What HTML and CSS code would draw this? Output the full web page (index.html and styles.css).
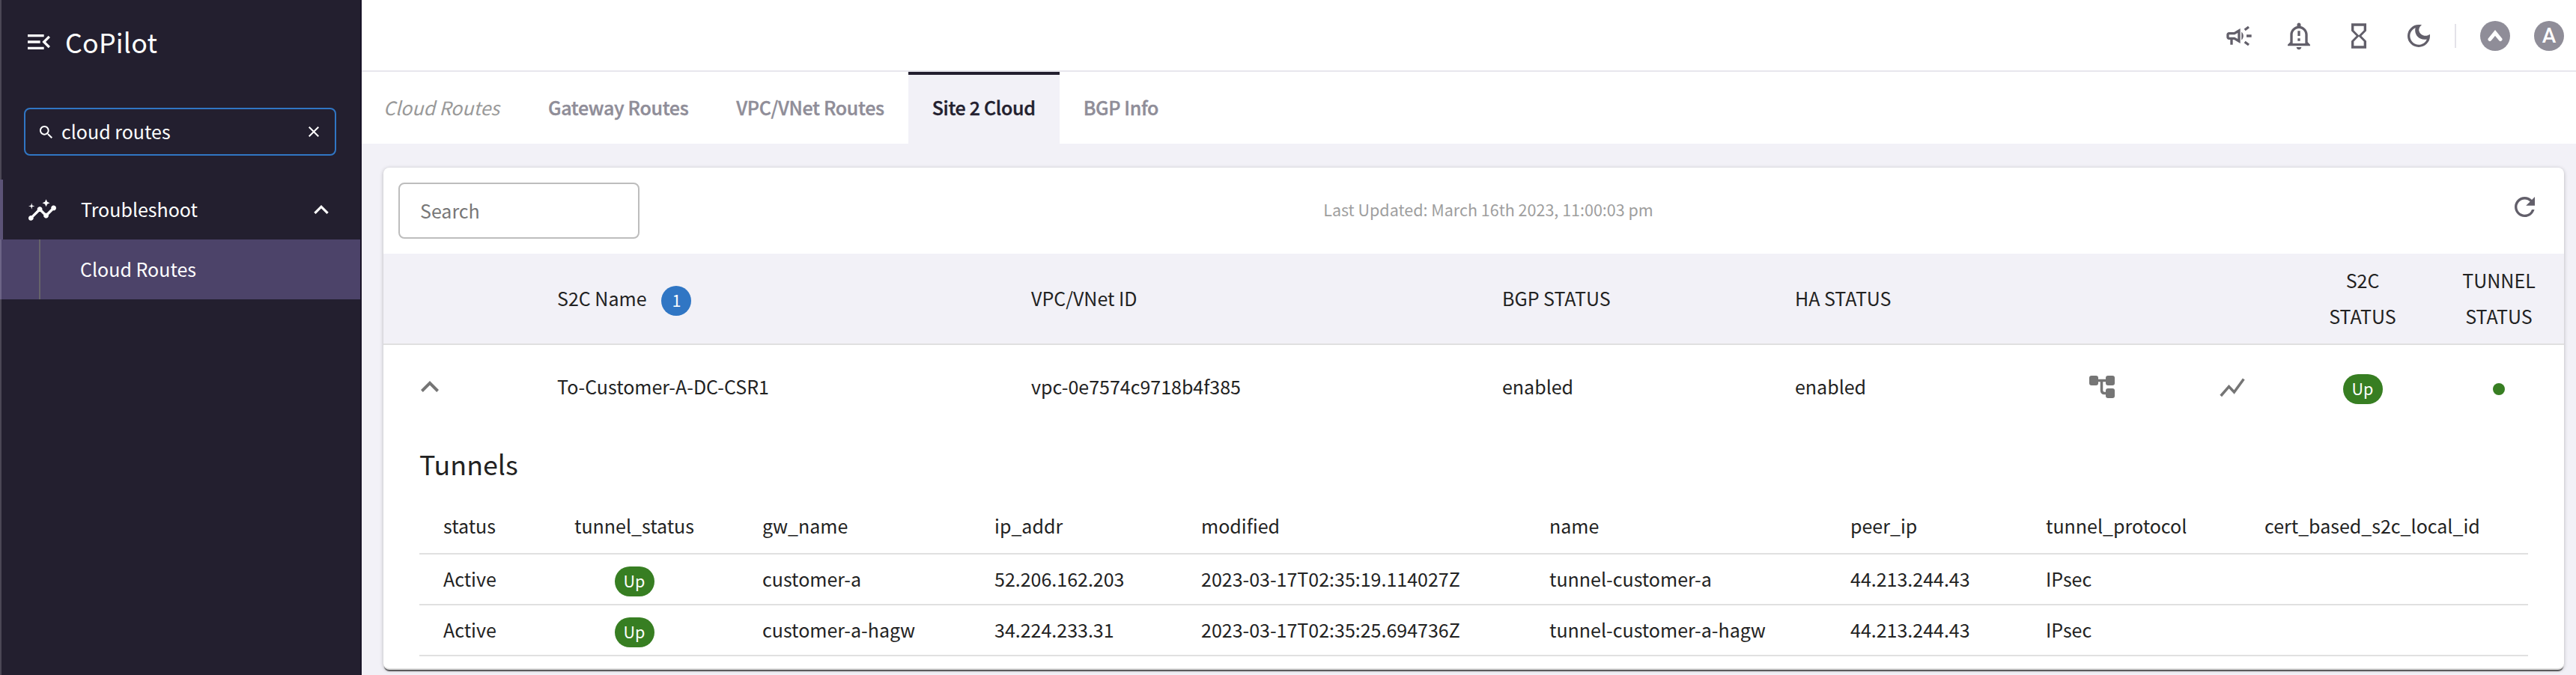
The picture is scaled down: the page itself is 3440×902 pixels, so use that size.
FILE: index.html
```html
<!DOCTYPE html>
<html lang="en">
<head>
<meta charset="utf-8">
<title>CoPilot</title>
<link rel="stylesheet" href="styles.css">
</head>
<body>
<div class="app">
  <aside class="sidebar">
    <div class="brand">
      <svg class="brand-icon" viewBox="3 6 18 12"><path d="M3 18h13v-2H3v2zM3 13h10v-2H3v2zm0-7v2h13V6H3zm18 9.59L17.42 12 21 8.41 19.59 7l-5 5 5 5L21 15.59z"/></svg>
      <span class="brand-name">CoPilot</span>
    </div>
    <div class="nav-search">
      <svg class="nav-search-icon" viewBox="3 3 17.5 17.5"><path d="M15.5 14h-.79l-.28-.27C15.41 12.59 16 11.11 16 9.5 16 5.91 13.09 3 9.5 3S3 5.91 3 9.5 5.91 16 9.5 16c1.61 0 3.09-.59 4.23-1.57l.27.28v.79l5 4.99L20.49 19l-4.99-5zm-6 0C7.01 14 5 11.99 5 9.5S7.01 5 9.5 5 14 7.01 14 9.5 11.99 14 9.5 14z"/></svg>
      <span class="nav-search-text">cloud routes</span>
      <svg class="nav-clear" viewBox="5 5 14 14"><path d="M19 6.41L17.59 5 12 10.59 6.41 5 5 6.41 10.59 12 5 17.59 6.41 19 12 13.41 17.59 19 19 17.59 13.41 12z"/></svg>
    </div>
    <nav>
      <div class="nav-group">
        <svg class="nav-icon" viewBox="1 3 22 17"><path d="M21 8c-1.450 0-2.260 1.440-1.930 2.510l-3.550 3.560c-.3-.09-.74-.09-1.040 0l-2.550-2.550C12.270 10.450 11.460 9 10 9c-1.450 0-2.270 1.440-1.930 2.520l-4.560 4.550C2.440 15.740 1 16.550 1 18c0 1.100.9 2 2 2 1.450 0 2.260-1.440 1.930-2.510l4.550-4.560c.3.09.74.09 1.040 0l2.550 2.550C12.730 16.550 13.540 18 15 18c1.450 0 2.270-1.440 1.930-2.520l3.560-3.550C21.560 12.260 23 11.450 23 10c0-1.100-.9-2-2-2z"/><path d="M15 9l.94-2.070L18 6l-2.060-.93L15 3l-.92 2.070L12 6l2.080.93zM3.500 11L4 9l2-.5L4 8l-.5-2L3 8l-2 .5L3 9z"/></svg>
        <span class="nav-label">Troubleshoot</span>
        <svg class="nav-chevron" viewBox="6 8 12 7.4"><path d="M12 8l-6 6 1.410 1.410L12 10.830l4.590 4.580L18 14z"/></svg>
      </div>
      <div class="nav-item">Cloud Routes</div>
    </nav>
  </aside>
  <main class="main">
    <header class="topbar">
      <div class="top-icons">
        <svg class="top-icon" viewBox="0 0 24 24"><path d="M18 11v2h4v-2h-4zM16 17.610c.96.710 2.210 1.650 3.200 2.390.4-.53.8-1.070 1.200-1.600-.99-.74-2.240-1.680-3.200-2.400-.4.540-.8 1.080-1.200 1.610zM20.400 5.600c-.4-.53-.8-1.070-1.200-1.600-.99.740-2.240 1.680-3.200 2.400.4.530.8 1.070 1.200 1.600.96-.72 2.210-1.650 3.200-2.400zM4 9c-1.100 0-2 .9-2 2v2c0 1.100.9 2 2 2h1v4h2v-4h1l5 3V6L8 9H4zm5.030 1.710L11 9.530v4.940l-1.970-1.180-.48-.29H4v-2h4.550l.48-.29zM15.500 12c0-1.330-.58-2.530-1.500-3.350v6.690c.92-.81 1.500-2.010 1.500-3.340z"/></svg>
        <svg class="top-icon" viewBox="0 0 24 24"><path d="M10.010 21.010c0 1.100.89 1.990 1.990 1.990s1.990-.89 1.990-1.990h-3.980zM12 6c2.760 0 5 2.240 5 5v7H7v-7c0-2.760 2.240-5 5-5zm0-4.500c-.83 0-1.500.67-1.500 1.500v1.170C7.360 4.850 5 7.650 5 11v6l-2 2v1h18v-1l-2-2v-6c0-3.350-2.360-6.150-5.500-6.830V3c0-.83-.67-1.500-1.500-1.500zM11 8h2v4h-2V8zm0 6h2v2h-2v-2z"/></svg>
        <svg class="top-icon" viewBox="0 0 24 24"><path d="M6 2v6l4 4-4 3.990V22h12v-6l-4-4 4-3.990V2H6zm10 14.500V20H8v-3.500l4-4 4 4zm-4-5l-4-4V4h8v3.500l-4 4z"/></svg>
        <svg class="top-icon" viewBox="0 0 24 24"><path d="M9.370 5.510c-.18.640-.27 1.310-.27 1.990 0 4.080 3.320 7.400 7.400 7.400.68 0 1.350-.09 1.990-.27C17.450 17.190 14.930 19 12 19c-3.860 0-7-3.140-7-7 0-2.930 1.810-5.450 4.370-6.490zM12 3a9 9 0 1 0 9 9c0-.46-.04-.92-.1-1.360A5.400 5.400 0 0 1 12.100 7.500c0-1.810.89-3.420 2.260-4.400C13.920 3.040 13.460 3 12 3z"/></svg>
      </div>
      <span class="divider"></span>
      <span class="avatar"><svg class="avatar-mark" viewBox="0 0 20 16"><path d="M3 12.500L10 4l7 8.500"/></svg></span>
      <span class="avatar avatar-letter">A</span>
    </header>
    <div class="tabs">
      <span class="tab tab-title">Cloud Routes</span>
      <span class="tab">Gateway Routes</span>
      <span class="tab">VPC/VNet Routes</span>
      <span class="tab tab-active">Site 2 Cloud</span>
      <span class="tab">BGP Info</span>
    </div>
    <section class="card">
      <div class="toolbar">
        <div class="search">Search</div>
        <span class="updated">Last Updated: March 16th 2023, 11:00:03 pm</span>
        <svg class="refresh" viewBox="4 4 16 16"><path d="M17.650 6.350A7.958 7.958 0 0 0 12 4c-4.420 0-7.990 3.580-7.990 8s3.570 8 7.990 8c3.730 0 6.840-2.550 7.730-6h-2.080A5.990 5.990 0 0 1 12 18c-3.310 0-6-2.690-6-6s2.690-6 6-6c1.660 0 3.140.69 4.220 1.780L13 11h7V4l-2.350 2.350z"/></svg>
      </div>
      <div class="grid grid-head">
        <span></span>
        <span class="name-head">S2C Name <b class="count">1</b></span>
        <span>VPC/VNet ID</span>
        <span>BGP STATUS</span>
        <span>HA STATUS</span>
        <span></span>
        <span></span>
        <span class="mid">S2C<br>STATUS</span>
        <span class="mid">TUNNEL<br>STATUS</span>
      </div>
      <div class="grid grid-row">
        <span class="cell-toggle"><svg class="toggle" viewBox="6 8 12 7.400"><path d="M12 8l-6 6 1.410 1.410L12 10.830l4.590 4.580L18 14z"/></svg></span>
        <span>To-Customer-A-DC-CSR1</span>
        <span>vpc-0e7574c9718b4f385</span>
        <span>enabled</span>
        <span>enabled</span>
        <span class="mid mid-icon"><svg class="tree" viewBox="0 0 34 30"><path d="M11 6.500h12M16.500 6.500v13q0 4 4 4H24"/><rect x="0" y="0" width="12" height="13" rx="3"/><rect x="22" y="0" width="12" height="13" rx="3"/><rect x="22" y="17" width="12" height="13" rx="3"/></svg></span>
        <span class="mid mid-icon"><svg class="trend" viewBox="0 0 34 30"><path d="M1.700 27L12.500 14.500l7 7.500L32.300 4.500"/></svg></span>
        <span class="mid mid-badge"><span class="pill">Up</span></span>
        <span class="mid mid-badge"><i class="dot"></i></span>
      </div>
      <h2 class="subtitle">Tunnels</h2>
      <div class="tunnels">
        <div class="trow thead">
          <span>status</span><span class="mid">tunnel_status</span><span>gw_name</span><span>ip_addr</span><span>modified</span><span>name</span><span>peer_ip</span><span>tunnel_protocol</span><span>cert_based_s2c_local_id</span>
        </div>
        <div class="trow">
          <span>Active</span><span class="mid mid-badge"><span class="pill">Up</span></span><span>customer-a</span><span>52.206.162.203</span><span>2023-03-17T02:35:19.114027Z</span><span>tunnel-customer-a</span><span>44.213.244.43</span><span>IPsec</span><span></span>
        </div>
        <div class="trow">
          <span>Active</span><span class="mid mid-badge"><span class="pill">Up</span></span><span>customer-a-hagw</span><span>34.224.233.31</span><span>2023-03-17T02:35:25.694736Z</span><span>tunnel-customer-a-hagw</span><span>44.213.244.43</span><span>IPsec</span><span></span>
        </div>
      </div>
    </section>
  </main>
</div>
</body>
</html>
```
FILE: styles.css
```css
* { box-sizing: border-box; }
body {
  margin: 0;
  font-family: "Noto Sans CJK SC", "Noto Sans", sans-serif;
  font-size: 25px;
  color: #222;
  background: #f2f1f7;
}
svg { display: block; flex: none; fill: currentColor; }
.app { display: flex; width: 3440px; height: 902px; overflow: hidden; }

.sidebar {
  width: 483px;
  flex: none;
  background: #231f2f;
  border-right: 2px solid #1a1528;
  box-shadow: inset 2px 0 0 #4b4755;
  color: #fff;
}
.brand { display: flex; align-items: center; height: 112px; padding-left: 37px; gap: 20px; }
.brand-icon { width: 30px; height: 20px; }
.brand-name { padding-bottom: 3px; font-size: 35.800px; line-height: 50px; letter-spacing: 0.2px; }
.nav-search {
  display: flex;
  align-items: center;
  width: 417px;
  height: 64px;
  margin: 32px 0 32px 32px;
  padding: 0 21px 0 19px;
  border: 2px solid #3076c4;
  border-radius: 8px;
}
.nav-search-icon { width: 17px; height: 17px; }
.nav-search-text { flex: 1; margin-left: 12px; padding-bottom: 2px; }
.nav-clear { width: 14px; height: 14px; }
.nav-group {
  display: flex;
  align-items: center;
  height: 80px;
  padding: 0 42px 0 34px;
  border-left: 4px solid #5c5377;
}
.nav-icon { width: 37px; height: 29px; }
.nav-label { flex: 1; margin-left: 33px; padding-bottom: 2px; }
.nav-chevron { width: 20px; height: 12px; }
.nav-item {
  height: 80px;
  line-height: 78px;
  padding-left: 107px;
  background: linear-gradient(90deg, #6c6486 2px, #4c4369 2px, #4c4369 52px, #66636a 52px, #66636a 54px, #4c4369 54px);
}

.main { flex: 1; min-width: 0; }
.topbar {
  display: flex;
  align-items: center;
  justify-content: flex-end;
  height: 96px;
  padding: 2px 16px 0 0;
  border-bottom: 2px solid #e7e6ed;
  background: #fff;
  color: #625f6a;
}
.top-icons { display: flex; gap: 40px; margin-right: 28px; }
.top-icon { width: 40px; height: 40px; }
.divider { width: 2px; height: 32px; margin-right: 32px; background: #e3e2e9; }
.avatar {
  display: flex;
  align-items: center;
  justify-content: center;
  width: 40px;
  height: 40px;
  margin-right: 32px;
  border-radius: 50%;
  background: #8f8d98;
  color: #fff;
}
.avatar-mark { width: 20px; height: 16px; fill: none; stroke: #fff; stroke-width: 5; stroke-linecap: round; }
.avatar-letter { margin-right: 0; font: 500 28px/40px Roboto, sans-serif; }

.tabs {
  display: flex;
  height: 96px;
  background: #fff;
  color: #8f8d98;
  font-weight: 500;
  letter-spacing: -0.32px;
}
.tab {
  padding: 0 32px;
  border-top: 4px solid transparent;
  line-height: 87px;
  -webkit-text-stroke: 0.4px currentColor;
}
.tab-title {
  padding: 0 33px 0 29px;
  color: #999;
  font-style: italic;
  font-weight: 400;
  letter-spacing: 0;
  -webkit-text-stroke: 0;
}
.tab-active { border-top-color: #231f2f; background: #f2f1f7; color: #231f2f; }

.card {
  width: 2912px;
  height: 671px;
  margin: 32px 0 0 29px;
  border-bottom: 2px solid #e0e0e0;
  border-radius: 8px;
  background: #fff;
  box-shadow: 0 3px 1px -1px rgba(0, 0, 0, 0.6), 0 1px 5px rgba(0, 0, 0, 0.25);
}
.toolbar { display: flex; align-items: center; height: 115px; padding: 0 39px 0 20px; }
.search {
  width: 322px;
  height: 75px;
  padding-left: 27px;
  border: 2px solid #bdbdbd;
  border-radius: 8px;
  line-height: 70px;
  color: #777;
}
.updated { flex: 1; margin-right: 237px; padding-bottom: 4px; font-size: 21.500px; color: #9e9e9e; text-align: center; }
.refresh { width: 27px; height: 27px; margin-bottom: 10px; color: #625f6a; }

.grid {
  display: grid;
  grid-template-columns: 232px 633px 629px 391px 315px 190px 158px 190px 174px;
  align-items: center;
}
.grid-head { height: 122px; padding-bottom: 2px; border-bottom: 2px solid #e0e0e0; background: #f2f1f7; line-height: 48px; }
.grid-row { height: 110px; }
.name-head { display: flex; align-items: center; }
.count {
  width: 40px;
  height: 40px;
  margin: 8px 0 0 20px;
  border-radius: 50%;
  background: #3076c4;
  color: #fff;
  font-size: 21.500px;
  font-weight: 400;
  line-height: 37px;
  text-align: center;
}
.mid { display: flex; justify-content: center; text-align: center; }
.mid-icon { padding-top: 2px; }
.mid-badge { padding-top: 8px; }
.cell-toggle { padding-left: 50px; }
.toggle { width: 24px; height: 15px; color: #757575; }
.tree { width: 34px; height: 30px; fill: #757575; }
.tree path { fill: none; stroke: #757575; stroke-width: 3.500; }
.trend { width: 34px; height: 30px; fill: none; stroke: #757575; stroke-width: 3.500; }
.pill {
  width: 53px;
  height: 40px;
  border-radius: 20px;
  background: #377e22;
  color: #fff;
  font-size: 21.500px;
  line-height: 37px;
  text-align: center;
}
.dot { width: 16px; height: 16px; border-radius: 50%; background: #377e22; }

.subtitle { margin: 20px 0 0 48px; font-size: 35.800px; font-weight: 400; line-height: 56px; }
.tunnels { width: 2816px; margin: 18px 0 0 48px; }
.trow {
  display: grid;
  grid-template-columns: 170px 256px 310px 276px 465px 402px 261px 292px 1fr;
  align-items: center;
  height: 68px;
  padding: 0 0 2px 32px;
  border-bottom: 2px solid #e0e0e0;
  white-space: nowrap;
}
.trow .mid { margin-right: 86px; }
.thead { height: 76px; padding-bottom: 0; }
```
